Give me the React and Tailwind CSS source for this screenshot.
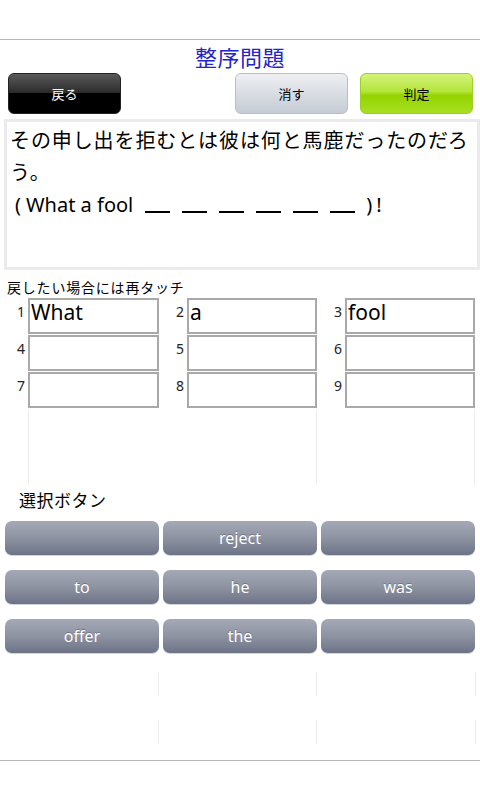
import React from "react";

const font = { fontFamily: '"Noto Sans", "Noto Sans CJK JP", sans-serif' };

const slots = ["What", "a", "fool", "", "", "", "", "", ""];
const choices = ["", "reject", "", "to", "he", "was", "offer", "the", ""];

function TopButton({ label, className }) {
  return (
    <button
      className={`w-[113px] h-[41px] rounded-[6px] text-[13px] flex items-center justify-center pt-[3px] ${className}`}
    >
      {label}
    </button>
  );
}

export default function App() {
  return (
    <div className="w-[480px] h-[800px] bg-white overflow-hidden flex flex-col" style={font}>
      <div className="h-[39px] shrink-0" />
      <div className="h-px bg-[#b8b8b8] shrink-0" />

      <h1 className="h-[32px] flex items-center justify-center text-[22px] tracking-[0.5px] text-[#2424c8] leading-none pt-[2px]">
        整序問題
      </h1>

      <div className="flex items-center pl-[8px] pr-[7px] h-[42px]">
        <TopButton
          label="戻る"
          className="text-white border border-[#222] bg-[linear-gradient(to_bottom,#5a5a5a_0%,#2b2b2b_48%,#000_50%,#000_100%)]"
        />
        <div className="flex-1" />
        <TopButton
          label="消す"
          className="text-black border border-[#b9bec6] bg-[linear-gradient(to_bottom,#eef0f3_0%,#d9dde3_50%,#c6ccd5_100%)]"
        />
        <div className="w-[12px]" />
        <TopButton
          label="判定"
          className="text-black border border-[#9ccd28] bg-[linear-gradient(to_bottom,#d4f37a_0%,#b4e43a_45%,#94d200_55%,#a7e022_100%)]"
        />
      </div>

      <div className="ml-[4px] mt-[5px] h-[151px] border-[3px] border-[#ebebeb] pl-[3px] pt-[3px] text-[20px] leading-[32px] text-black">
        <p className="tracking-[0.9px]">その申し出を拒むとは彼は何と馬鹿だったのだろう。</p>
        <p className="flex items-baseline pl-[5px]">
          <span>(</span>
          <span className="ml-[5px]">What a fool</span>
          {[0, 1, 2, 3, 4, 5].map((b) => (
            <span key={b} className="inline-block w-[25px] h-[2px] bg-black ml-[12px] self-end mb-[8px]" />
          ))}
          <span className="ml-[11px]">)</span>
          <span className="ml-[4px]">!</span>
        </p>
      </div>

      <p className="mt-[9px] pl-[7px] text-[14px] leading-[18px] tracking-[0.8px] text-black">戻したい場合には再タッチ</p>

      <div className="grid grid-cols-[28px_131px_28px_130px_28px_130px] gap-y-px mt-px">
        {slots.map((word, i) => (
          <React.Fragment key={i}>
            <span className="text-[14px] text-[#222] text-right pr-[3px] pt-[5px] leading-[18px]">{i + 1}</span>
            <div className="h-[36px] border-2 border-[#a9a9a9] bg-white text-[21px] leading-[25px] pl-[1px] text-black">
              {word}
            </div>
          </React.Fragment>
        ))}
      </div>

      <div className="grid grid-cols-[28px_289px_158px] h-[75px] mt-[2px]">
        <div />
        <div className="border-l border-r border-[#ececec]" />
        <div className="border-r border-[#ececec]" />
      </div>

      <p className="pl-[19px] mt-[5px] text-[17px] leading-[22px] tracking-[0.5px] text-black">選択ボタン</p>

      <div className="grid grid-cols-3 gap-x-[4px] gap-y-[14px] px-[5px] mt-[9px] w-[480px] pr-[5px]">
        {choices.map((c, i) => (
          <button
            key={i}
            className="h-[35px] rounded-[7px] border-b border-[#d0d4de] bg-[linear-gradient(to_bottom,#a5a9b6_0%,#8e93a2_50%,#6d7387_100%)] text-white text-[16px] flex items-center justify-center [text-shadow:0_-1px_0_rgba(0,0,0,0.25)]"
          >
            {c}
          </button>
        ))}
      </div>

      <div className="flex flex-col gap-[24px] mt-[18px]">
        {[0, 1].map((r) => (
          <div key={r} className="grid grid-cols-[159px_158px_159px] h-[24px]">
            <div className="border-r border-[#ececec]" />
            <div className="border-r border-[#ececec]" />
            <div className="border-r border-[#ececec]" />
          </div>
        ))}
      </div>

      <div className="mt-[16px] h-px bg-[#b8b8b8]" />
    </div>
  );
}
